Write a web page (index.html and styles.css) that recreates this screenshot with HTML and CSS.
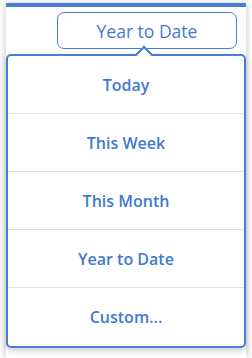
FILE: index.html
```html
<!DOCTYPE html>
<html lang="en">
<head>
  <meta charset="UTF-8" />
  <title>Date Range</title>
  <link rel="stylesheet" href="styles.css">
</head>
<body>

  <div class="page">
    <div class="toolbar">
      <button class="range-btn">Year to Date</button>
    </div>

    <div class="range-menu">
      <div class="range-item">Today</div>
      <div class="range-item">This Week</div>
      <div class="range-item">This Month</div>
      <div class="range-item">Year to Date</div>
      <div class="range-item">Custom...</div>
    </div>
  </div>

</body>
</html>
```

FILE: styles.css
```css
html, body {
  margin: 0;
  padding: 0;
  background: #fff;
  font-family: "Open Sans", "Noto Sans", sans-serif;
}

.page {
  margin: 3px 6px 0;
  height: 355px;
  box-sizing: border-box;
  border-top: 4px solid #4a7dd4;
  background: #fff;
  box-shadow:
    -3px 0 5px rgba(0,0,0,0.12),
    3px 0 5px rgba(0,0,0,0.12);
}

.toolbar {
  display: flex;
  justify-content: flex-end;
  padding: 5px 9px 0 0;
}

.range-btn {
  width: 180px;
  height: 37px;
  border: 1px solid #4a7dd4;
  border-radius: 7px;
  background: #fff;
  color: #3f79d3;
  font-family: inherit;
  font-size: 17.5px;
  padding: 0;
}

.range-menu {
  position: relative;
  margin-top: 5px;
  border: 2px solid #4a7dd4;
  border-radius: 5px;
  background: #fff;
  box-shadow: 0 3px 6px rgba(0,0,0,0.18);
}
.range-menu::before {
  content: "";
  position: absolute;
  top: -8px;
  left: 130px;
  width: 12px;
  height: 12px;
  background: #fff;
  border-top: 2px solid #4a7dd4;
  border-left: 2px solid #4a7dd4;
  transform: rotate(45deg);
  box-sizing: border-box;
}

.range-item {
  display: flex;
  align-items: center;
  justify-content: center;
  height: 58px;
  box-sizing: border-box;
  border-bottom: 1px solid #e1e1e1;
  color: #3f79d3;
  font-size: 16px;
  font-weight: 600;
}
.range-item:last-child {
  border-bottom: none;
}
```
